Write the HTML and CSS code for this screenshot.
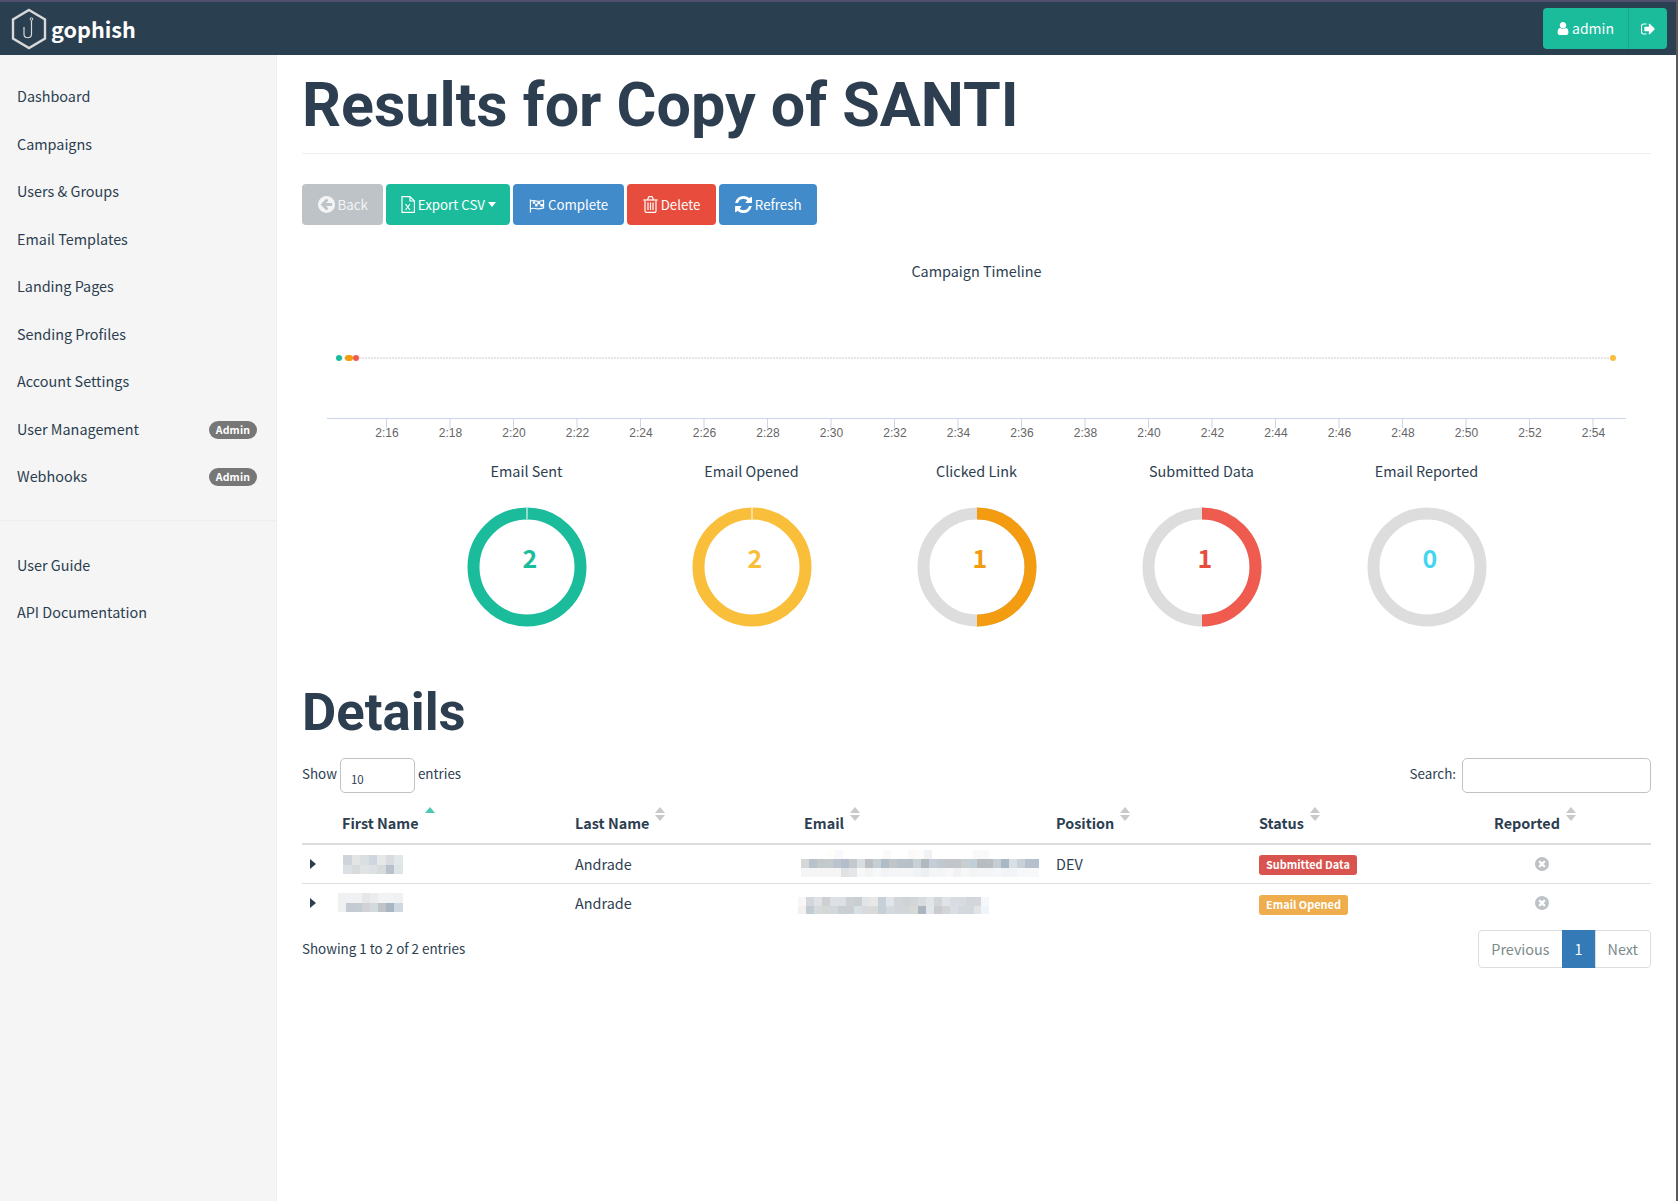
FILE: index.html
```html
<!DOCTYPE html>
<html lang="en">
<head>
    <meta charset="utf-8">
    <title>Results for Copy of SANTI - Gophish</title>
    <link rel="stylesheet" href="styles.css">
</head>
<body>
    <svg class="defs" width="0" height="0">
        <symbol id="i-sort" viewBox="0 0 10 14"><path d="M5 0l5 6H0z"/><path d="M0 8h10l-5 6z"/></symbol>
        <symbol id="i-sort-up" viewBox="0 0 10 14"><path d="M5 0l5 6H0z"/></symbol>
        <symbol id="i-times" viewBox="128 128 1536 1536"><path d="M1277 1122q0-26-19-45l-181-181 181-181q19-19 19-45 0-27-19-46l-90-90q-19-19-46-19-26 0-45 19l-181 181-181-181q-19-19-45-19-27 0-46 19l-90 90q-19 19-19 46 0 26 19 45l181 181-181 181q-19 19-19 45 0 27 19 46l90 90q19 19 46 19 26 0 45-19l181-181 181 181q19 19 45 19 27 0 46-19l90-90q19-19 19-46zm387-226q0 209-103 385.5t-279.5 279.5-385.5 103-385.5-103-279.5-279.5-103-385.5 103-385.5 279.5-279.5 385.5-103 385.5 103 279.5 279.5 103 385.5z"/></symbol>
        <symbol id="i-caret" viewBox="0 0 6 10"><path d="M0 0l6 5-6 5z"/></symbol>
    </svg>

    <header class="navbar">
        <a class="brand" href="#">
            <svg class="brand-logo" width="36" height="42" viewBox="0 0 36 42" fill="none" stroke="#d9d9d9">
                <path stroke-width="2.4" d="M18 2l16 9.5v19L18 40 2 30.5v-19z"/>
                <circle cx="20.5" cy="11" r="1.3" stroke-width="1"/>
                <path stroke-width="1.2" d="M20.5 12.5V26c0 5-7.500 5-7.500 0v-7"/>
            </svg>
            <span>gophish</span>
        </a>
        <div class="user-group">
            <a class="user-btn" href="#">
                <svg class="icon" width="12" height="13" viewBox="192 128 1408 1536"><path d="M1536 1399q0 109-62.500 187t-150.500 78h-854q-88 0-150.500-78t-62.500-187q0-85 8.500-160.500t31.500-152 58.500-131 94-89 134.500-34.500q131 128 313 128t313-128q76 0 134.500 34.500t94 89 58.500 131 31.500 152 8.500 160.500zm-256-887q0 159-112.500 271.500t-271.500 112.500-271.500-112.500-112.500-271.500 112.500-271.500 271.500-112.500 271.500 112.500 112.500 271.500z"/></svg>
                admin
            </a>
            <a class="user-btn logout" href="#">
                <svg class="icon" width="14" height="14" viewBox="64 128 1600 1536"><path d="M704 1440q0 4 1 20t.5 26.500-3 23.500-10 19.500-20.500 6.500h-320q-119 0-203.500-84.500t-84.500-203.500v-704q0-119 84.500-203.500t203.500-84.500h320q13 0 22.500 9.500t9.500 22.500q0 4 1 20t.5 26.500-3 23.500-10 19.500-20.500 6.500h-320q-66 0-113 47t-47 113v704q0 66 47 113t113 47h312l11.500 1 11.500 3 8 5.500 7 9 2 13.500zm928-544q0 26-19 45l-544 544q-19 19-45 19t-45-19-19-45v-288h-448q-26 0-45-19t-19-45v-384q0-26 19-45t45-19h448v-288q0-26 19-45t45-19 45 19l544 544q19 19 19 45z"/></svg>
            </a>
        </div>
    </header>

    <div class="layout">
        <nav class="sidebar">
            <ul class="side-nav">
                <li><a href="#">Dashboard</a></li>
                <li><a href="#">Campaigns</a></li>
                <li><a href="#">Users &amp; Groups</a></li>
                <li><a href="#">Email Templates</a></li>
                <li><a href="#">Landing Pages</a></li>
                <li><a href="#">Sending Profiles</a></li>
                <li><a href="#">Account Settings</a></li>
                <li><a href="#">User Management <span class="badge">Admin</span></a></li>
                <li><a href="#">Webhooks <span class="badge">Admin</span></a></li>
            </ul>
            <hr class="side-rule">
            <ul class="side-nav">
                <li><a href="#">User Guide</a></li>
                <li><a href="#">API Documentation</a></li>
            </ul>
        </nav>

        <main class="content">
            <h1 class="page-title">Results for Copy of SANTI</h1>

            <div class="actions">
                <button class="btn btn-grey">
                    <svg class="icon" width="17" height="17" viewBox="128 128 1536 1536"><path d="M1408 960v-128q0-26-19-45t-45-19h-502l189-189q19-19 19-45t-19-45l-91-91q-18-18-45-18t-45 18l-362 362-91 91q-18 18-18 45t18 45l91 91 362 362q18 18 45 18t45-18l91-91q18-18 18-45t-18-45l-189-189h502q26 0 45-19t19-45zm256-64q0 209-103 385.500t-279.500 279.500-385.500 103-385.500-103-279.500-279.500-103-385.500 103-385.500 279.500-279.500 385.500-103 385.500 103 279.500 279.500 103 385.500z"/></svg>
                    Back
                </button>
                <button class="btn btn-teal">
                    <svg class="icon line" width="14" height="17" viewBox="0 0 14 17"><path d="M1 .6h8l4.400 4.400v11.400H1z"/><path d="M9 .6V5h4.400"/><path d="M4.500 8l4.500 6M9 8l-4.500 6"/></svg>
                    Export CSV <span class="caret"></span>
                </button>
                <button class="btn btn-blue">
                    <svg class="icon line" width="16" height="14" viewBox="0 0 17 14"><path d="M1.500 0v14"/><path d="M1.500 2c3-2 5 0 7.500 0s4-.5 6.500-1v8c-2.500 1-4 1-6.500 1s-4.500-1.500-7.500 0"/><path class="check" d="M4 2h2.500v2.500H4zM9 2.500h3v2.700H9zM6.500 4.500H9v3H6.500zM12 5h3v2.500h-3z"/></svg>
                    Complete
                </button>
                <button class="btn btn-red">
                    <svg class="icon line" width="15" height="17" viewBox="0 0 15 17"><path d="M2 4.500V15a1.400 1.400 0 0 0 1.400 1.400h8.200A1.400 1.400 0 0 0 13 15V4.500"/><path d="M.3 4h14.400"/><path d="M4.500 4l1-2.500a1 1 0 0 1 1-.9h2a1 1 0 0 1 1 .9l1 2.500"/><path d="M5 6.500v7.500M7.500 6.500v7.500M10 6.500v7.500"/></svg>
                    Delete
                </button>
                <button class="btn btn-blue">
                    <svg class="icon" width="17" height="17" viewBox="128 128 1536 1536"><path d="M1639 1056q0 5-1 7-64 268-268 434.500t-478 166.500q-146 0-282.500-55t-243.500-157l-129 129q-19 19-45 19t-45-19-19-45v-448q0-26 19-45t45-19h448q26 0 45 19t19 45-19 45l-137 137q71 66 161 102t187 36q134 0 250-65t186-179q11-17 53-117 8-23 30-23h192q13 0 22.500 9.500t9.500 22.500zm25-800v448q0 26-19 45t-45 19h-448q-26 0-45-19t-19-45 19-45l138-138q-148-137-349-137-134 0-250 65t-186 179q-11 17-53 117-8 23-30 23h-199q-13 0-22.500-9.500t-9.500-22.500v-7q65-268 270-434.500t480-166.500q146 0 284 55.500t245 156.500l130-129q19-19 45-19t45 19 19 45z"/></svg>
                    Refresh
                </button>
            </div>

            <section class="timeline">
                <h3 class="chart-title">Campaign Timeline</h3>
                <svg class="timeline-chart" width="1349" height="160" viewBox="0 0 1349 160">
                    <line class="tl-line" x1="36" y1="68" x2="1311" y2="68"/>
                    <circle cx="37" cy="68" r="3" fill="#1abc9c"/>
                    <circle cx="46" cy="68" r="3" fill="#f39c12"/>
                    <circle cx="48" cy="68" r="3" fill="#f39c12"/>
                    <circle cx="54" cy="68" r="3" fill="#f05b4f"/>
                    <circle cx="1311" cy="68" r="3" fill="#fbbd3b"/>
                    <line class="axis" x1="25" y1="128.500" x2="1324" y2="128.500"/>
                    <g class="axis-labels">
                        <text x="85" y="147">2:16</text>
                        <text x="148.500" y="147">2:18</text>
                        <text x="212" y="147">2:20</text>
                        <text x="275.500" y="147">2:22</text>
                        <text x="339" y="147">2:24</text>
                        <text x="402.500" y="147">2:26</text>
                        <text x="466" y="147">2:28</text>
                        <text x="529.500" y="147">2:30</text>
                        <text x="593" y="147">2:32</text>
                        <text x="656.500" y="147">2:34</text>
                        <text x="720" y="147">2:36</text>
                        <text x="783.500" y="147">2:38</text>
                        <text x="847" y="147">2:40</text>
                        <text x="910.500" y="147">2:42</text>
                        <text x="974" y="147">2:44</text>
                        <text x="1037.500" y="147">2:46</text>
                        <text x="1101" y="147">2:48</text>
                        <text x="1164.500" y="147">2:50</text>
                        <text x="1228" y="147">2:52</text>
                        <text x="1291.500" y="147">2:54</text>
                    </g>
                    <path class="axis" d="M84.500 128v10M148 128v10M211.500 128v10M275 128v10M338.500 128v10M402 128v10M465.500 128v10M529 128v10M592.500 128v10M656 128v10M719.500 128v10M783 128v10M846.500 128v10M910 128v10M973.500 128v10M1037 128v10M1100.500 128v10M1164 128v10M1227.500 128v10M1291 128v10"/>
                </svg>
            </section>

            <section class="stats">
                <div class="stat">
                    <h3 class="chart-title">Email Sent</h3>
                    <svg class="ring" width="120" height="120" viewBox="0 0 120 120">
                        <circle class="ring-track" cx="60" cy="60" r="53.500" stroke="#1abc9c"/>
                        <line class="ring-gap" x1="60" y1="0" x2="60" y2="12"/>
                        <text class="ring-num" x="63" y="61" fill="#1abc9c">2</text>
                    </svg>
                </div>
                <div class="stat">
                    <h3 class="chart-title">Email Opened</h3>
                    <svg class="ring" width="120" height="120" viewBox="0 0 120 120">
                        <circle class="ring-track" cx="60" cy="60" r="53.500" stroke="#f9bf3b"/>
                        <line class="ring-gap" x1="60" y1="0" x2="60" y2="12"/>
                        <text class="ring-num" x="63" y="61" fill="#f9bf3b">2</text>
                    </svg>
                </div>
                <div class="stat">
                    <h3 class="chart-title">Clicked Link</h3>
                    <svg class="ring" width="120" height="120" viewBox="0 0 120 120">
                        <circle class="ring-track" cx="60" cy="60" r="53.500" stroke="#dddddd"/>
                        <path class="ring-half" d="M60 6.500a53.500 53.500 0 0 1 0 107" stroke="#f39c12"/>
                        <text class="ring-num" x="63" y="61" fill="#f39c12">1</text>
                    </svg>
                </div>
                <div class="stat">
                    <h3 class="chart-title">Submitted Data</h3>
                    <svg class="ring" width="120" height="120" viewBox="0 0 120 120">
                        <circle class="ring-track" cx="60" cy="60" r="53.500" stroke="#dddddd"/>
                        <path class="ring-half" d="M60 6.500a53.500 53.500 0 0 1 0 107" stroke="#f05b4f"/>
                        <text class="ring-num" x="63" y="61" fill="#e74c3c">1</text>
                    </svg>
                </div>
                <div class="stat">
                    <h3 class="chart-title">Email Reported</h3>
                    <svg class="ring" width="120" height="120" viewBox="0 0 120 120">
                        <circle class="ring-track" cx="60" cy="60" r="53.500" stroke="#dddddd"/>
                        <text class="ring-num" x="63" y="61" fill="#45d6ef">0</text>
                    </svg>
                </div>
            </section>

            <h2 class="section-title">Details</h2>

            <div class="table-tools">
                <label class="tool">Show <span class="field field-small">10</span> entries</label>
                <label class="tool">Search: <span class="field field-search"></span></label>
            </div>

            <table class="results">
                <colgroup>
                    <col class="c-toggle"><col class="c-first"><col class="c-last"><col class="c-email"><col class="c-pos"><col class="c-status"><col class="c-rep">
                </colgroup>
                <thead>
                    <tr>
                        <th></th>
                        <th>First Name<svg class="sort sort-active" width="10" height="14"><use href="#i-sort-up"/></svg></th>
                        <th>Last Name<svg class="sort" width="10" height="14"><use href="#i-sort"/></svg></th>
                        <th>Email<svg class="sort" width="10" height="14"><use href="#i-sort"/></svg></th>
                        <th>Position<svg class="sort" width="10" height="14"><use href="#i-sort"/></svg></th>
                        <th>Status<svg class="sort" width="10" height="14"><use href="#i-sort"/></svg></th>
                        <th>Reported<svg class="sort" width="10" height="14"><use href="#i-sort"/></svg></th>
                    </tr>
                </thead>
                <tbody>
                    <tr>
                        <td class="toggle"><svg width="6" height="10"><use href="#i-caret"/></svg></td>
                        <td>
                            <svg class="mosaic mosaic-first-a" width="60" height="19" shape-rendering="crispEdges">
                                <rect x="0" width="9" height="10" fill="#ced4d9"/><rect x="8.500" width="9" height="10" fill="#e3e5e3"/><rect x="17" width="9" height="10" fill="#dadfe2"/><rect x="25.500" width="9" height="10" fill="#cfd6df"/><rect x="34" width="9" height="10" fill="#e6e8e8"/><rect x="42.500" width="9" height="10" fill="#d9dcdf"/><rect x="51" width="9" height="10" fill="#e2e8ea"/>
                                <rect x="0" y="9.500" width="9" height="10" fill="#dae0e3"/><rect x="8.500" y="9.500" width="9" height="10" fill="#d8dadb"/><rect x="17" y="9.500" width="9" height="10" fill="#e0e3e6"/><rect x="25.500" y="9.500" width="9" height="10" fill="#dee1e4"/><rect x="34" y="9.500" width="9" height="10" fill="#d8dbdc"/><rect x="42.500" y="9.500" width="9" height="10" fill="#b9c2cb"/><rect x="51" y="9.500" width="9" height="10" fill="#dfe5e7"/>
                            </svg>
                        </td>
                        <td>Andrade</td>
                        <td>
                            <svg class="mosaic mosaic-email-a" width="238" height="27" shape-rendering="crispEdges">
                                <rect x="26" width="8" height="9" fill="#fdfdf9"/><rect x="34" width="8" height="9" fill="#f8f9fd"/><rect x="82" width="8" height="9" fill="#fafafa"/><rect x="107" width="8" height="9" fill="#fdf9f9"/><rect x="115" width="8" height="9" fill="#fcfcfa"/><rect x="123" width="8" height="9" fill="#f1f2f5"/><rect x="172" width="16" height="9" fill="#f8f9f8"/>
                                <g transform="translate(0 9)">
                                    <rect x="0" width="8" height="9" fill="#d5d8d8"/><rect x="8" width="8" height="9" fill="#b8c2cc"/><rect x="16" width="8" height="9" fill="#c3c8cb"/><rect x="24" width="8" height="9" fill="#c4cbce"/><rect x="32" width="8" height="9" fill="#bcc3ce"/><rect x="40" width="8" height="9" fill="#b4bdca"/><rect x="48" width="8" height="9" fill="#c3c9ce"/><rect x="56" width="8" height="9" fill="#d8dde1"/><rect x="64" width="8" height="9" fill="#bcc0c4"/><rect x="72" width="8" height="9" fill="#c6ced6"/><rect x="80" width="8" height="9" fill="#b0bcc8"/><rect x="88" width="8" height="9" fill="#c2c6c9"/><rect x="96" width="8" height="9" fill="#b9c2cb"/><rect x="104" width="8" height="9" fill="#b9c1c8"/><rect x="112" width="8" height="9" fill="#c8d1d6"/><rect x="120" width="8" height="9" fill="#b3babf"/><rect x="128" width="8" height="9" fill="#c5ced8"/><rect x="136" width="8" height="9" fill="#c2c8d0"/><rect x="144" width="8" height="9" fill="#c2c5ca"/><rect x="152" width="8" height="9" fill="#c2c5c9"/><rect x="160" width="8" height="9" fill="#c9cfd1"/><rect x="168" width="8" height="9" fill="#c2ced8"/><rect x="176" width="8" height="9" fill="#b8bcc2"/><rect x="184" width="8" height="9" fill="#b8bdc2"/><rect x="192" width="8" height="9" fill="#c5ced4"/><rect x="200" width="8" height="9" fill="#aab7c5"/><rect x="208" width="8" height="9" fill="#d9dfe3"/><rect x="216" width="8" height="9" fill="#c8d0d8"/><rect x="224" width="14" height="9" fill="#b5c0cc"/>
                                </g>
                                <g transform="translate(0 18)">
                                    <rect x="0" width="40" height="9" fill="#f5f5f6"/><rect x="40" width="8" height="9" fill="#dfe1e3"/><rect x="48" width="8" height="9" fill="#e4e6e9"/><rect x="56" width="8" height="9" fill="#f7f9f8"/><rect x="64" width="8" height="9" fill="#f2f4f3"/><rect x="72" width="8" height="9" fill="#f7f8fa"/><rect x="80" width="8" height="9" fill="#f1f3f6"/><rect x="88" width="24" height="9" fill="#f4f5f6"/><rect x="112" width="8" height="9" fill="#f1f2f5"/><rect x="120" width="8" height="9" fill="#ecf0f3"/><rect x="128" width="16" height="9" fill="#f4f5f6"/><rect x="144" width="8" height="9" fill="#f8f8f8"/><rect x="152" width="8" height="9" fill="#f0f2f5"/><rect x="160" width="8" height="9" fill="#f6f7f7"/><rect x="168" width="8" height="9" fill="#f2f4f6"/><rect x="176" width="16" height="9" fill="#f4f5f6"/><rect x="192" width="8" height="9" fill="#f6f7f8"/><rect x="200" width="16" height="9" fill="#f3f4f7"/><rect x="216" width="22" height="9" fill="#f7f8f9"/>
                                </g>
                            </svg>
                        </td>
                        <td>DEV</td>
                        <td><span class="label label-red">Submitted Data</span></td>
                        <td class="reported"><svg width="14" height="14"><use href="#i-times"/></svg></td>
                    </tr>
                    <tr>
                        <td class="toggle"><svg width="6" height="10"><use href="#i-caret"/></svg></td>
                        <td>
                            <svg class="mosaic mosaic-first-b" width="65" height="19" shape-rendering="crispEdges">
                                <rect x="0" width="9" height="10" fill="#eff0f0"/><rect x="8" width="17" height="10" fill="#f0f1f3"/><rect x="24" width="9" height="10" fill="#e5e6e8"/><rect x="32" width="9" height="10" fill="#eaecee"/><rect x="40" width="9" height="10" fill="#f2f3f4"/><rect x="48" width="9" height="10" fill="#f1f2f3"/><rect x="56" width="9" height="10" fill="#eff1f3"/>
                                <rect x="0" y="9.500" width="9" height="10" fill="#eff0f0"/><rect x="8" y="9.500" width="9" height="10" fill="#c5cad0"/><rect x="16" y="9.500" width="9" height="10" fill="#c3ccd3"/><rect x="24" y="9.500" width="9" height="10" fill="#d0d2d5"/><rect x="32" y="9.500" width="9" height="10" fill="#d3dade"/><rect x="40" y="9.500" width="9" height="10" fill="#bfc3c8"/><rect x="48" y="9.500" width="9" height="10" fill="#a9b5c0"/><rect x="56" y="9.500" width="9" height="10" fill="#cfd8e0"/>
                            </svg>
                        </td>
                        <td>Andrade</td>
                        <td>
                            <svg class="mosaic mosaic-email-b" width="191" height="17" shape-rendering="crispEdges">
                                <rect x="0" width="8" height="9" fill="#f7f7f7"/><rect x="8" width="8" height="9" fill="#d3d6da"/><rect x="16" width="8" height="9" fill="#dfe1e5"/><rect x="24" width="8" height="9" fill="#cdd1d3"/><rect x="32" width="8" height="9" fill="#dde1e5"/><rect x="40" width="8" height="9" fill="#dcdfe3"/><rect x="48" width="8" height="9" fill="#cdd1d4"/><rect x="56" width="8" height="9" fill="#c8ced2"/><rect x="64" width="8" height="9" fill="#e1e4e8"/><rect x="72" width="8" height="9" fill="#e8e8e4"/><rect x="80" width="8" height="9" fill="#c6d0da"/><rect x="88" width="8" height="9" fill="#e1e4e8"/><rect x="96" width="8" height="9" fill="#d2d6d8"/><rect x="104" width="8" height="9" fill="#cfd3d6"/><rect x="112" width="8" height="9" fill="#d2d6d8"/><rect x="120" width="8" height="9" fill="#d8dcdf"/><rect x="128" width="8" height="9" fill="#e2e5e7"/><rect x="136" width="8" height="9" fill="#d2d6d6"/><rect x="144" width="8" height="9" fill="#e0e3e9"/><rect x="152" width="8" height="9" fill="#d9dde2"/><rect x="160" width="8" height="9" fill="#d8dbdf"/><rect x="168" width="15" height="9" fill="#d3d7dc"/><rect x="183" width="8" height="9" fill="#f4f8fc"/>
                                <g transform="translate(0 9)">
                                    <rect x="0" width="8" height="8" fill="#f2f1ef"/><rect x="8" width="8" height="8" fill="#c0ccd2"/><rect x="16" width="8" height="8" fill="#d7dadc"/><rect x="24" width="8" height="8" fill="#d4d7d4"/><rect x="32" width="8" height="8" fill="#d0d8dc"/><rect x="40" width="8" height="8" fill="#c9ced2"/><rect x="48" width="8" height="8" fill="#cacfd3"/><rect x="56" width="8" height="8" fill="#d7e0e4"/><rect x="64" width="16" height="8" fill="#d8dadb"/><rect x="80" width="8" height="8" fill="#c6ced6"/><rect x="88" width="8" height="8" fill="#d2d9df"/><rect x="96" width="8" height="8" fill="#d1d6da"/><rect x="104" width="8" height="8" fill="#d2d6d8"/><rect x="112" width="8" height="8" fill="#d7d9d9"/><rect x="120" width="8" height="8" fill="#abb5c0"/><rect x="128" width="8" height="8" fill="#e1e6ea"/><rect x="136" width="8" height="8" fill="#cacacf"/><rect x="144" width="8" height="8" fill="#d0d6d6"/><rect x="152" width="8" height="8" fill="#dadde4"/><rect x="160" width="8" height="8" fill="#d3d7de"/><rect x="168" width="8" height="8" fill="#d2d8de"/><rect x="176" width="7" height="8" fill="#e3e4e4"/><rect x="183" width="8" height="8" fill="#eff5fa"/>
                                </g>
                            </svg>
                        </td>
                        <td></td>
                        <td><span class="label label-orange">Email Opened</span></td>
                        <td class="reported"><svg width="14" height="14"><use href="#i-times"/></svg></td>
                    </tr>
                </tbody>
            </table>

            <div class="table-foot">
                <span class="table-info">Showing 1 to 2 of 2 entries</span>
                <ul class="pagination">
                    <li><a href="#">Previous</a></li>
                    <li class="active"><a href="#">1</a></li>
                    <li><a href="#">Next</a></li>
                </ul>
            </div>
        </main>
    </div>
</body>
</html>
```
FILE: styles.css
```css
* {
    box-sizing: border-box;
}

html, body {
    height: 100%;
}

body {
    margin: 0;
    display: flex;
    flex-direction: column;
    min-height: 1201px;
    overflow: hidden;
    border-right: 2px solid #5a5a5a;

    font-family: "Noto Sans CJK SC", "Open Sans", sans-serif;
    font-size: 14.4px;
    line-height: 23px;
    color: #2c3e50;
    background-color: #fff;
}

a {
    color: inherit;
    text-decoration: none;
}

.defs {
    position: absolute;
}

.icon {
    fill: currentColor;
    vertical-align: -3px;
}

.icon.line {
    fill: none;
    stroke: currentColor;
    stroke-width: 1.2;
}

.icon .check {
    fill: currentColor;
    stroke: none;
}

/* navbar */
.navbar {
    flex: none;
    display: flex;
    align-items: center;
    justify-content: space-between;
    height: 55px;
    padding: 0 11px 0 11px;

    background-color: #2a3f50;
    border-top: 2px solid #50506e;
    margin-right: -2px;
}

.brand {
    display: flex;
    align-items: center;
    gap: 4px;

    font-size: 21.6px;
    font-weight: 700;
    color: #fff;
}

.user-group {
    display: flex;
}

.user-btn {
    display: flex;
    align-items: center;
    gap: 3px;
    width: 85px;
    height: 41px;
    justify-content: center;

    font-size: 14px;
    color: #fff;
    background-color: #1abc9c;
    border-radius: 4px 0 0 4px;
}

.user-btn.logout {
    width: 39px;
    border-left: 1px solid #17a88b;
    border-radius: 0 4px 4px 0;
}

/* sidebar */
.layout {
    flex: 1;
    display: flex;
    min-height: 0;
}

.sidebar {
    flex: none;
    width: 277px;
    padding-top: 16.800px;

    background-color: #f5f5f5;
    border-right: 1px solid #eee;
}

.side-nav {
    margin: 0;
    padding: 0;
    list-style: none;
}

.side-nav a {
    display: flex;
    align-items: center;
    justify-content: space-between;
    padding: 12.25px 19px 12.25px 17px;
}

.side-rule {
    margin: 21px 0 19px 0;
    border: 0;
    border-top: 1px solid #eee;
}

.badge {
    width: 48px;
    height: 18px;
    margin-top: 3px;

    font-size: 10.500px;
    font-weight: 700;
    letter-spacing: .2px;
    line-height: 18px;
    text-align: center;
    color: #fff;
    background-color: #777;
    border-radius: 10px;
}

/* main */
.content {
    flex: 1;
    min-width: 0;
    padding: 0 25px;
}

.page-title {
    margin: 0;
    padding: 14px 0 12px 0;

    font-family: Roboto, sans-serif;
    font-size: 61px;
    font-weight: 700;
    line-height: 72px;
    border-bottom: 1px solid #eee;
}

.actions {
    display: flex;
    gap: 3px;
    margin-top: 30px;
}

.btn {
    height: 41px;
    padding: 0 15.500px 1px 15.500px;

    font: inherit;
    font-size: 13.3px;
    color: #fff;
    border: 0;
    border-radius: 4px;
}

.btn-grey {
    color: #f3f4f5;
    background-color: #bdc3c7;
}

.btn-teal {
    padding: 0 14.500px 1px 14.500px;
    background-color: #1abc9c;
}

.btn-blue {
    background-color: #428bca;
}

.btn-red {
    padding: 0 16px 1px 16px;
    background-color: #e74c3c;
}

.caret {
    display: inline-block;
    width: 0;
    height: 0;
    vertical-align: 3px;
    border-top: 5px solid #fff;
    border-left: 4.500px solid transparent;
    border-right: 4.500px solid transparent;
}

.chart-title {
    margin: 0;

    font-size: 14.4px;
    font-weight: 400;
    line-height: 23px;
    text-align: center;
}

.timeline {
    margin-top: 34px;
}

.timeline-chart {
    display: block;
    margin-top: 8px;
}

.tl-line {
    stroke: #ddd;
    stroke-width: 1.5;
    stroke-dasharray: 2 1;
}

.axis {
    fill: none;
    stroke: #c8d5ea;
    stroke-width: 1;
}

.axis-labels text {
    font-family: "Liberation Sans", sans-serif;
    font-size: 12px;
    text-anchor: middle;
    fill: #666;
}

.stats {
    display: flex;
    padding-left: 112px;
    margin-top: 9px;
}

.stat {
    flex: none;
    width: 225px;
    display: flex;
    flex-direction: column;
    align-items: center;
    gap: 25px;
}

.ring {
    display: block;
}

.ring-track, .ring-half {
    fill: none;
    stroke-width: 12;
}

.ring-gap {
    stroke: #fff;
    stroke-width: 1;
}

.ring-num {
    font-size: 25px;
    font-weight: 700;
    text-anchor: middle;
}

.section-title {
    margin: 55px 0 0 0;

    font-family: Roboto, sans-serif;
    font-size: 52.7px;
    font-weight: 700;
    line-height: 60px;
}

/* table */
.table-tools {
    display: flex;
    justify-content: space-between;
    margin-top: 16px;
}

.tool {
    display: flex;
    gap: 3px;
    align-items: flex-start;

    font-size: 13.4px;
    line-height: 30px;
}

.field {
    display: block;
    height: 35px;
    border: 1px solid #bdc3c7;
    border-radius: 5px;
}

.field-small {
    width: 75px;
    padding: 7px 0 0 10px;

    font-size: 11.500px;
    line-height: 26px;
}

.field-search {
    width: 189px;
    margin-left: 3px;
}

.results {
    width: 100%;
    margin-top: 1px;
    table-layout: fixed;
    border-collapse: collapse;
}

.c-toggle { width: 32px; }
.c-first { width: 233px; }
.c-last { width: 229px; }
.c-email { width: 252px; }
.c-pos { width: 203px; }
.c-status { width: 235px; }
.c-rep { width: 165px; }

.results th {
    height: 50px;
    padding: 8px 8px 0 8px;

    font-weight: 700;
    text-align: left;
    white-space: nowrap;
    border-bottom: 2px solid #ddd;
}

.results td {
    height: 39px;
    padding: 0 8px;
    border-bottom: 1px solid #ddd;
}

.results tbody tr:last-child td {
    border-bottom: 0;
}

.results td svg {
    display: block;
}

.sort {
    margin-left: 6px;
    vertical-align: 4px;
    transform: translateY(-4px);
    fill: #c9c9c9;
}

.sort-active {
    fill: #4cc9b0;
}

.toggle {
    fill: #2c3e50;
}

.mosaic-first-a {
    margin: 1px 0 0 1px;
}

.mosaic-first-b {
    margin: 0 0 0 -4px;
}

.mosaic-email-a {
    margin: 0 0 0 -3px;
}

.mosaic-email-b {
    margin: 5px 0 0 -6px;
}

.label {
    display: block;
    width: fit-content;
    height: 20px;
    padding: 0 7px;

    font-size: 10.900px;
    font-weight: 700;
    line-height: 19px;
    color: #fff;
    border-radius: 3px;
}

.label-red {
    margin-top: 2px;
    background-color: #d9534f;
}

.label-orange {
    margin-top: 5px;
    background-color: #f0ad4e;
}

.reported {
    padding-left: 49px !important;
    fill: #bdc3c7;
}

.table-foot {
    display: flex;
    align-items: center;
    justify-content: space-between;
    margin-top: 8px;
}

.table-info {
    font-size: 13.4px;
}

.pagination {
    display: flex;
    margin: 0;
    padding: 0;
    list-style: none;
    height: 37.500px;
}

.pagination a {
    display: block;
    height: 37.500px;
    padding: 5.500px 12px;

    color: #7b8a8b;
    line-height: 24px;
    border: 1px solid #ddd;
    margin-left: -1px;
}

.pagination li:first-child a {
    border-radius: 4px 0 0 4px;
}

.pagination li:last-child a {
    border-radius: 0 4px 4px 0;
}

.pagination .active a {
    color: #fff;
    background-color: #337ab7;
    border-color: #337ab7;
}
```
